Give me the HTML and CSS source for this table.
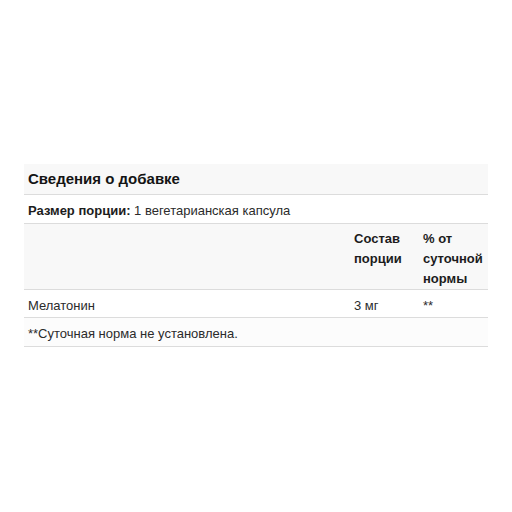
FILE: index.html
```html
<!DOCTYPE html>
<html lang="ru">
<head>
<meta charset="utf-8">
<link rel="stylesheet" href="styles.css">
</head>
<body>
<div class="page">
  <table class="facts">
    <colgroup>
      <col class="c-name">
      <col class="c-amount">
      <col class="c-dv">
    </colgroup>
    <tr class="row-title">
      <td colspan="3">Сведения о добавке</td>
    </tr>
    <tr class="row-serving">
      <td colspan="3"><b>Размер порции:</b> 1 вегетарианская капсула</td>
    </tr>
    <tr class="row-head">
      <td></td>
      <td>Состав<br>порции</td>
      <td>% от<br>суточной<br>нормы</td>
    </tr>
    <tr class="row-item">
      <td>Мелатонин</td>
      <td>3 мг</td>
      <td>**</td>
    </tr>
    <tr class="row-note">
      <td colspan="3">**Суточная норма не установлена.</td>
    </tr>
  </table>
</div>
</body>
</html>
```

FILE: styles.css
```css
html, body {
  margin: 0;
  padding: 0;
  background: #ffffff;
}
.page {
  padding: 164px 24px 0 24px;
  font-family: "Liberation Sans", Arial, sans-serif;
  color: #2b2b2b;
}
.facts {
  width: 464px;
  border-collapse: collapse;
  font-size: 13px;
  line-height: 20px;
  table-layout: fixed;
}
.c-name { width: 326px; }
.c-amount { width: 69px; }
.c-dv { width: 69px; }
.facts td {
  padding: 6px 4px 2px 4px;
  vertical-align: top;
  border-bottom: 1px solid #dcdcdc;
}
.facts b {
  font-weight: bold;
  color: #1c1c1c;
}
.row-title td {
  background: #f8f8f8;
  font-size: 15px;
  font-weight: bold;
  line-height: 18px;
  padding: 6px 4px 6px 4px;
  color: #141414;
}
.row-serving td {
  background: #ffffff;
  padding-bottom: 2px;
}
.row-head td {
  background: #f8f8f8;
  font-weight: bold;
  color: #1c1c1c;
  padding: 5px 4px 0 4px;
}
.row-item td {
  background: #ffffff;
  padding-bottom: 1px;
}
.row-note td {
  background: #fcfcfc;
}
```
